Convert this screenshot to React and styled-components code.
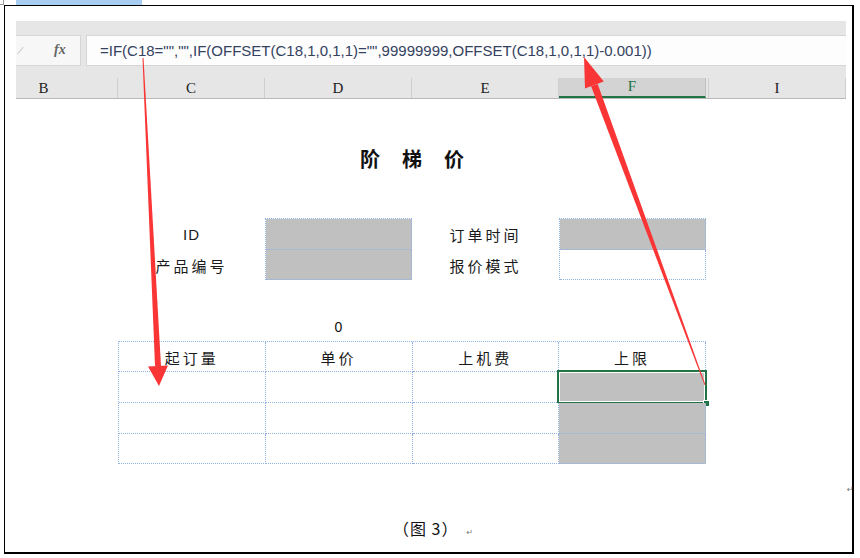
import React from 'react';
import styled, { createGlobalStyle } from 'styled-components';

const GlobalStyle = createGlobalStyle`
  html, body {
    margin: 0;
    padding: 0;
    background: #ffffff;
  }
  body {
    font-family: "Noto Sans CJK SC", "Liberation Sans", sans-serif;
  }
`;

const CJK = `"Noto Sans CJK SC", "Liberation Sans", sans-serif`;
const DOT = '1px dotted #8fb1e3';

// 页面
const Page = styled.div`
  position: relative;
  width: 860px;
  height: 558px;
  overflow: hidden;
  background: #fff;
`;

const TopStrip = styled.div`
  display: flex;
  height: 5px;
`;

const CornerMark = styled.div`
  width: 3px;
  height: 4px;
  border-right: 1px solid #9a9a9a;
  border-bottom: 1px solid #9a9a9a;
`;

const BlueTab = styled.div`
  margin-left: 12px;
  width: 126px;
  background: #a7cdf1;
`;

const Frame = styled.div`
  box-sizing: border-box;
  margin-left: 4px;
  width: 850px;
  height: 549px;
  border-style: solid;
  border-color: #000;
  border-width: 1px 2px 2px 1px;
  padding: 15px 0 0 11px;
  display: flex;
  flex-direction: column;
`;

const ImageLine = styled.div`
  display: flex;
  align-items: flex-end;
`;

const ReturnMark = styled.span`
  font-family: "DejaVu Sans", sans-serif;
  font-size: 8px;
  color: #777;
  line-height: 10px;
  margin-left: ${p => p.$gap || 0}px;
`;

// Excel 截图
const Excel = styled.div`
  width: 830px;
  height: 474px;
  display: flex;
  flex-direction: column;
  background: #fff;
`;

const TopBand = styled.div`
  height: 14px;
  background: #e6e6e6;
`;

const FormulaRow = styled.div`
  display: flex;
  height: 32px;
  background: #e6e6e6;
`;

const FxBox = styled.div`
  box-sizing: border-box;
  width: 65px;
  display: flex;
  align-items: center;
  background: #f7f7f7;
  border: 1px solid #d6d6d6;
  border-left: none;
`;

const Tick = styled.span`
  width: 1px;
  height: 9px;
  background: #c8c8c8;
  transform: rotate(40deg);
  margin-left: 4px;
`;

const Fx = styled.span`
  margin-left: 33px;
  font-family: "Liberation Serif", serif;
  font-style: italic;
  font-weight: bold;
  font-size: 14px;
  color: #666;
`;

const FormulaInput = styled.div`
  box-sizing: border-box;
  flex: 1;
  margin-left: 5px;
  display: flex;
  align-items: center;
  padding-left: 13px;
  background: #fdfdfd;
  border: 1px solid #d6d6d6;
  border-right: none;
  font-family: "Liberation Sans", sans-serif;
  font-size: 15px;
  color: #34415f;
  white-space: nowrap;
`;

const MidBand = styled.div`
  height: 12px;
  background: #e6e6e6;
`;

const HeaderRow = styled.div`
  display: grid;
  grid-template-columns: 102px 147px 147px 147px 147px 140px;
  height: 21px;
  background: #e6e6e6;
  border-bottom: 1px solid #b9b9b9;
`;

const ColHead = styled.div`
  box-sizing: border-box;
  display: flex;
  align-items: flex-end;
  justify-content: center;
  padding-bottom: 1px;
  padding-right: ${p => p.$shift || 0}px;
  font-family: "Liberation Serif", serif;
  font-size: 15px;
  color: ${p => (p.$active ? '#217346' : '#222')};
  background: ${p => (p.$active ? '#d3d3d3' : 'transparent')};
  border-right: 1px solid ${p => (p.$active ? '#c0c0c0' : '#cfcfcf')};
  border-bottom: ${p => (p.$active ? '2px solid #217346' : 'none')};
  border-left: ${p => (p.$double ? '1px solid #cfcfcf' : 'none')};
  margin-left: ${p => (p.$double ? '2px' : '0')};
`;

// 工作表
const Sheet = styled.div`
  display: grid;
  grid-template-columns: 102px 147px 147px 147px 147px 140px;
  grid-template-rows: 120px repeat(9, 30.67px);
`;

const Title = styled.div`
  grid-column: 2 / 6;
  grid-row: 1;
  align-self: start;
  padding-top: 48px;
  text-align: center;
  font-family: ${CJK};
  font-weight: bold;
  font-size: 20px;
  line-height: 24px;
  letter-spacing: 22px;
  text-indent: 22px;
  color: #111;
`;

const Label = styled.div`
  grid-column: ${p => p.$col};
  grid-row: ${p => p.$row};
  display: flex;
  align-items: center;
  justify-content: center;
  font-family: ${p => (p.$latin ? '"Liberation Sans", sans-serif' : CJK)};
  font-size: 15px;
  letter-spacing: ${p => (p.$latin ? '1px' : '3px')};
  color: #1a1a1a;
`;

const Zero = styled.div`
  grid-column: 3;
  grid-row: 5;
  display: flex;
  align-items: center;
  justify-content: center;
  padding-top: 2px;
  font-family: "Liberation Sans", sans-serif;
  font-size: 14px;
  color: #111;
`;

const BoxStack = styled.div`
  grid-column: ${p => p.$col};
  grid-row: 2 / 4;
  display: grid;
  grid-template-rows: 1fr 1fr;
  border-top: ${DOT};
  border-left: ${DOT};
  margin-top: -1px;
`;

const Cell = styled.div`
  position: relative;
  box-sizing: border-box;
  display: flex;
  align-items: flex-end;
  justify-content: center;
  padding-bottom: 3px;
  background: ${p => (p.$fill ? '#c0c0c0' : '#fff')};
  border-right: ${DOT};
  border-bottom: ${DOT};
  font-family: ${CJK};
  font-size: 15px;
  letter-spacing: 3px;
  color: #1a1a1a;
`;

const Table = styled.div`
  grid-column: 2 / 6;
  grid-row: 6 / 10;
  display: grid;
  grid-template-columns: repeat(4, 1fr);
  grid-template-rows: repeat(4, 1fr);
  border-top: ${DOT};
  border-left: ${DOT};
  margin-top: -1px;
`;

const Selection = styled.div`
  position: absolute;
  left: -2px;
  top: -2px;
  right: -2px;
  bottom: -2px;
  border: 2px solid #217346;
  box-shadow: inset 0 0 0 1px #ffffff;
`;

const Handle = styled.div`
  position: absolute;
  right: -5px;
  bottom: -5px;
  width: 5px;
  height: 5px;
  background: #217346;
  border: 1px solid #fff;
`;

const Caption = styled.div`
  margin-top: 21px;
  padding-left: 377px;
  display: flex;
  align-items: baseline;
  font-family: ${CJK};
  font-size: 16px;
  line-height: 24px;
  letter-spacing: 1px;
  color: #111;
`;

const Overlay = styled.svg`
  position: absolute;
  left: 0;
  top: 0;
  pointer-events: none;
`;

const columns = ['B', 'C', 'D', 'E', 'F', 'I'];
const formula = '=IF(C18="","",IF(OFFSET(C18,1,0,1,1)="",99999999,OFFSET(C18,1,0,1,1)-0.001))';
const tableHeads = ['起订量', '单价', '上机费', '上限'];

function Arrows() {
  return (
    <Overlay width="860" height="558" viewBox="0 0 860 558">
      <g fill="#fa3535">
        {/* 左侧箭头 */}
        <polygon points="142.5,58 143.5,58 161,366 155,366" />
        <polygon points="148,366.5 168,365.5 159,386" />
        {/* 右侧箭头 */}
        <polygon points="705.5,385 704.5,385 591.1,86.3 597.7,83.9" />
        <polygon points="585,88.6 603.8,81.6 584,57" />
      </g>
    </Overlay>
  );
}

export default function App() {
  return (
    <Page>
      <GlobalStyle />
      <TopStrip>
        <CornerMark />
        <BlueTab />
      </TopStrip>
      <Frame>
        <ImageLine>
          <Excel>
            <TopBand />
            <FormulaRow>
              <FxBox>
                <Tick />
                <Fx>fx</Fx>
              </FxBox>
              <FormulaInput>{formula}</FormulaInput>
            </FormulaRow>
            <MidBand />
            <HeaderRow>
              {columns.map(c => (
                <ColHead
                  key={c}
                  $active={c === 'F'}
                  $double={c === 'I'}
                  $shift={c === 'B' ? 46 : 0}
                >
                  {c}
                </ColHead>
              ))}
            </HeaderRow>
            <Sheet>
              <Title>阶梯价</Title>
              <Label $col={2} $row={2} $latin>ID</Label>
              <Label $col={2} $row={3}>产品编号</Label>
              <BoxStack $col={3}>
                <Cell $fill />
                <Cell $fill />
              </BoxStack>
              <Label $col={4} $row={2}>订单时间</Label>
              <Label $col={4} $row={3}>报价模式</Label>
              <BoxStack $col={5}>
                <Cell $fill />
                <Cell />
              </BoxStack>
              <Zero>0</Zero>
              <Table>
                {tableHeads.map(h => (
                  <Cell key={h}>{h}</Cell>
                ))}
                {[0, 1, 2].map(r =>
                  [0, 1, 2, 3].map(c => (
                    <Cell key={`${r}-${c}`} $fill={c === 3}>
                      {r === 0 && c === 3 && (
                        <Selection>
                          <Handle />
                        </Selection>
                      )}
                    </Cell>
                  ))
                )}
              </Table>
            </Sheet>
          </Excel>
          <ReturnMark $gap={1}>↵</ReturnMark>
        </ImageLine>
        <Caption>
          （图 3）<ReturnMark $gap={8}>↵</ReturnMark>
        </Caption>
      </Frame>
      <Arrows />
    </Page>
  );
}
